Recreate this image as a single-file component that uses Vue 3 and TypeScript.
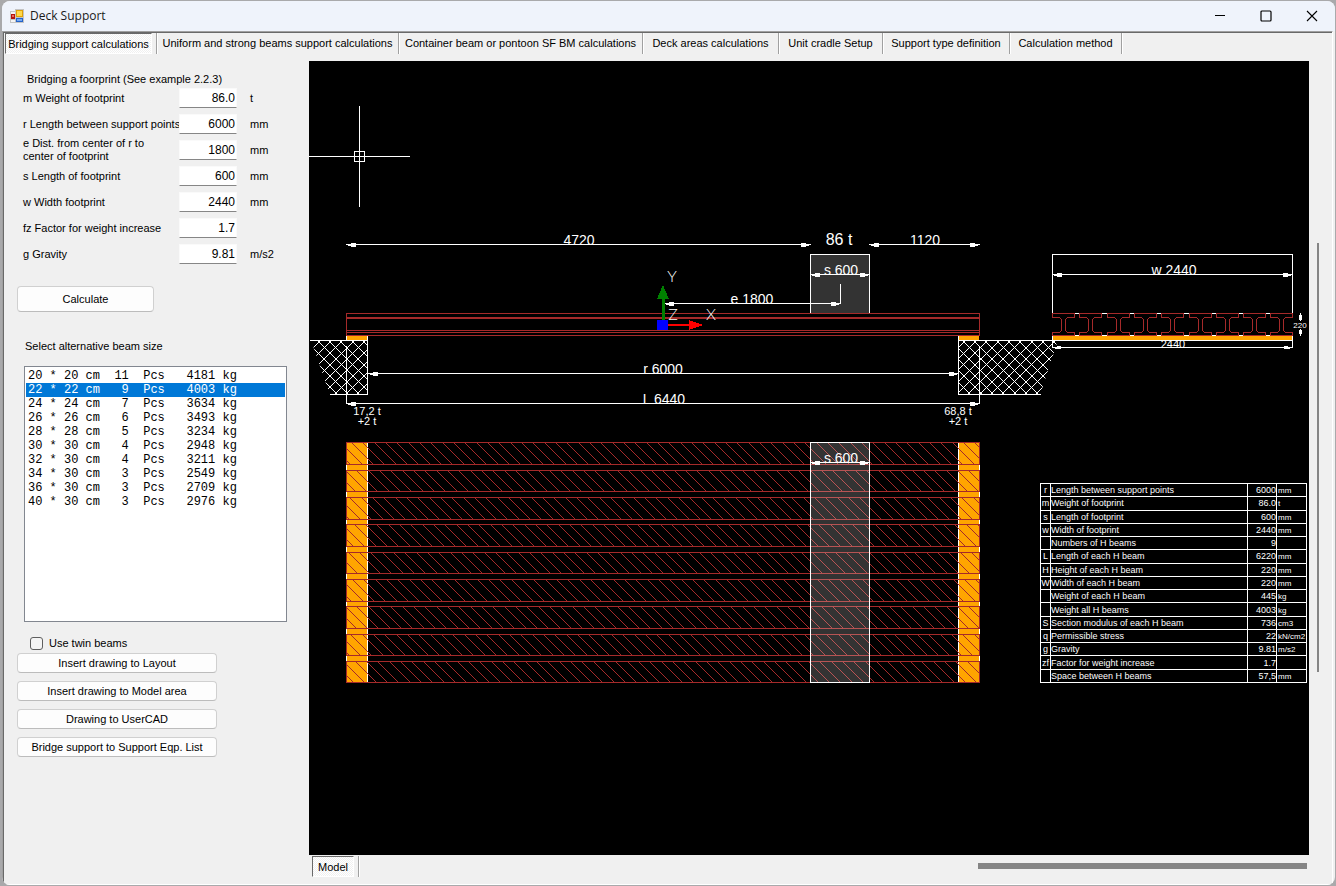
<script setup lang="ts">
import { ref } from 'vue'

interface Field { id: string; label: string; value: string; unit: string }
interface Dim { x1: number; x2: number; y: number; text?: string; tx?: number }

const tabs: string[] = [
  'Bridging support calculations',
  'Uniform and strong beams support calculations',
  'Container beam or pontoon SF BM calculations',
  'Deck areas calculations',
  'Unit cradle Setup',
  'Support type definition',
  'Calculation method',
]
const activeTab = ref(0)

const fields = ref<Field[]>([
  { id: 'm', label: 'm Weight of footprint', value: '86.0', unit: 't' },
  { id: 'r', label: 'r Length between support points', value: '6000', unit: 'mm' },
  { id: 'e', label: 'e Dist. from center of r to\ncenter of footprint', value: '1800', unit: 'mm' },
  { id: 's', label: 's Length of footprint', value: '600', unit: 'mm' },
  { id: 'w', label: 'w Width footprint', value: '2440', unit: 'mm' },
  { id: 'fz', label: 'fz Factor for weight increase', value: '1.7', unit: '' },
  { id: 'g', label: 'g Gravity', value: '9.81', unit: 'm/s2' },
])

const beamSizes: [number, number, number, number][] = [
  [20, 20, 11, 4181], [22, 22, 9, 4003], [24, 24, 7, 3634], [26, 26, 6, 3493],
  [28, 28, 5, 3234], [30, 30, 4, 2948], [32, 30, 4, 3211], [34, 30, 3, 2549],
  [36, 30, 3, 2709], [40, 30, 3, 2976],
]
const selectedBeam = ref(1)
const twin = ref(false)
const beamLabel = (b: [number, number, number, number]): string =>
  `${b[0]} * ${b[1]} cm  ${String(b[2]).padStart(2)}  Pcs   ${b[3]} kg`.replace(/ /g, '\u00a0')

const actions: string[] = [
  'Insert drawing to Layout',
  'Insert drawing to Model area',
  'Drawing to UserCAD',
  'Bridge support to Support Eqp. List',
]

const rows: [string, string, string, string][] = [
  ['r', 'Length between support points', '6000', 'mm'],
  ['m', 'Weight of footprint', '86.0', 't'],
  ['s', 'Length of footprint', '600', 'mm'],
  ['w', 'Width of footprint', '2440', 'mm'],
  ['', 'Numbers of H beams', '9', ''],
  ['L', 'Length of each H beam', '6220', 'mm'],
  ['H', 'Height of each H beam', '220', 'mm'],
  ['W', 'Width of each H beam', '220', 'mm'],
  ['', 'Weight of each H beam', '445', 'kg'],
  ['', 'Weight all H beams', '4003', 'kg'],
  ['S', 'Section modulus of each H beam', '736', 'cm3'],
  ['q', 'Permissible stress', '22', 'kN/cm2'],
  ['g', 'Gravity', '9.81', 'm/s2'],
  ['zf', 'Factor for weight increase', '1.7', ''],
  ['', 'Space between H beams', '57,5', 'mm'],
]

// One-pixel lines built as filled shapes so that they stay crisp; all wind the same way.
const rect = (x: number, y: number, w: number, h: number): string => `M${x} ${y}h${w}v${h}h${-w}z`
const hl = (x1: number, x2: number, y: number, t = 1): string => rect(x1, y, x2 - x1 + 1, t)
const vl = (x: number, y1: number, y2: number): string => rect(x, y1, 1, y2 - y1 + 1)
const diag = (x: number, y: number, n: number, dir: number): string => `M${x} ${y}h1l${dir * n} ${n}h-1z`
const box = (x1: number, y1: number, x2: number, y2: number): string =>
  hl(x1, x2, y1) + hl(x1, x2, y2) + vl(x1, y1, y2) + vl(x2, y1, y2)
const dimPath = (x1: number, x2: number, y: number): string =>
  hl(x1, x2, y) +
  rect(x1 + 2, y, 4, 2) + rect(x1 + 5, y - 1, 5, 4) +
  rect(x2 - 5, y, 4, 2) + rect(x2 - 9, y - 1, 5, 4)

const dims: Dim[] = [
  { x1: 346, x2: 810, y: 244, text: '4720', tx: 579 },
  { x1: 869, x2: 979, y: 244, text: '1120', tx: 925 },
  { x1: 810, x2: 869, y: 274, text: 's 600', tx: 841 },
  { x1: 664, x2: 840, y: 303, text: 'e 1800', tx: 752 },
  { x1: 368, x2: 958, y: 373, text: 'r 6000', tx: 663 },
  { x1: 346, x2: 979, y: 403, text: 'L 6440', tx: 664 },
  { x1: 1052, x2: 1292, y: 274, text: 'w 2440', tx: 1174 },
]

const sideBeam = hl(346, 979, 313) + hl(346, 979, 317, 2) + hl(346, 979, 330) + hl(346, 979, 332) +
  hl(346, 979, 335) + vl(346, 313, 335) + vl(979, 313, 335)

const groundLines = hl(310, 367, 340) + vl(367, 336, 394) + hl(330, 367, 394) + vl(346, 346, 403) +
  hl(958, 1292, 340) + vl(958, 336, 394) + hl(958, 1040, 394) + vl(979, 346, 403) + vl(346, 336, 340)

const crossHatch = (nodeX: number, from: number, to: number): string => {
  let d = ''
  const step = 34 / 3
  for (let k = -20; k < 20; k++) {
    const x = nodeX + k * step
    if (x < from - 70 || x > to + 70) continue
    d += diag(x - 2, 340, 56, 1) + diag(x + 2, 340, 56, -1)
  }
  return d
}
const leftHatch = crossHatch(318, 309, 368)
const rightHatch = crossHatch(963, 958, 1060)

const planTops = [442, 470, 497, 524, 552, 579, 606, 634, 661]
const planBottoms = [464, 491, 519, 546, 573, 601, 628, 655, 682]
const planOutline = planTops.map((t, i) => box(346, t, 979, planBottoms[i])).join('')
const planHatch = planTops.map((t, i) => {
  const b = planBottoms[i]
  let d = ''
  for (let k = -40; k < 70; k++) {
    const c = -68.7 + (k * 34) / 3
    const x1 = Math.max(c + t, 346)
    const x2 = Math.min(c + b, 979)
    if (x2 > x1) d += diag(x1, x1 - c, x2 - x1, 1)
  }
  return d
}).join('')

const sections = Array.from({ length: 9 }, (_, i) => 1052 + Math.round(i * 27.3))
const outline = (pts: [number, number][]): string => {
  let d = ''
  pts.forEach((p, i) => {
    const q = pts[(i + 1) % pts.length]
    if (p[1] === q[1]) d += hl(Math.min(p[0], q[0]), Math.max(p[0], q[0]), p[1])
    else if (p[0] === q[0]) d += vl(p[0], Math.min(p[1], q[1]), Math.max(p[1], q[1]))
    else {
      const sx = Math.sign(q[0] - p[0])
      const sy = Math.sign(q[1] - p[1])
      for (let k = 1; k < Math.abs(q[0] - p[0]); k++) d += rect(p[0] + sx * k, p[1] + sy * k, 1, 1)
    }
  })
  return d
}
const sectionPath = sections.map((x) => outline([
  [x, 313], [x + 22, 313], [x + 22, 317], [x + 15, 317], [x + 13, 319], [x + 13, 330], [x + 15, 332],
  [x + 22, 332], [x + 22, 335], [x, 335], [x, 332], [x + 7, 332], [x + 9, 330], [x + 9, 319],
  [x + 7, 317], [x, 317],
])).join('')

const frontLines = box(1052, 254, 1292, 313) + hl(1052, 1292, 335) + vl(1052, 336, 347) + vl(1292, 336, 347)
const frontDim = hl(1052, 1292, 347) + rect(1055, 347, 3, 2) + rect(1057, 346, 4, 3) +
  rect(1287, 347, 3, 2) + rect(1284, 346, 4, 3)
const heightDim = vl(1300, 313, 320) + vl(1300, 329, 335) + rect(1299, 315, 3, 5) + rect(1299, 330, 3, 4)
const cursor = vl(359, 106, 206) + hl(309, 409, 156) + box(354, 151, 364, 161)
const loadBox = hl(810, 869, 254) + vl(810, 254, 312) + vl(869, 254, 312) + vl(840, 284, 303)
const planEdges = vl(346, 442, 682) + vl(367, 442, 682) + vl(958, 442, 682) + vl(979, 442, 682)
</script>

<template>
  <div class="desktop">
    <div class="window">
      <header class="titlebar">
        <svg class="app-icon" viewBox="0 0 14 15" width="14" height="15" aria-hidden="true">
          <path d="M0 2h5V0h9v14H0z" fill="#c4c4c4" />
          <path d="M1 3h4v2H1zM1 11h4v2H1z" fill="#f4f4f4" />
          <rect x="1" y="5" width="4" height="5" fill="#b5130c" />
          <rect x="2" y="6" width="2" height="2" fill="#e8695f" />
          <rect x="6" y="1" width="7" height="7" fill="#e0a106" />
          <rect x="7" y="2" width="5" height="5" fill="#ffd84a" />
          <rect x="6" y="9" width="7" height="4" fill="#2563c9" />
          <rect x="7" y="10" width="5" height="2" fill="#76a9f2" />
        </svg>
        <h1>Deck Support</h1>
        <div class="caption">
          <button type="button" aria-label="Minimize">
            <svg viewBox="0 0 12 12" width="12" height="12"><path d="M1 5h10v1H1z" /></svg>
          </button>
          <button type="button" aria-label="Maximize">
            <svg viewBox="0 0 12 12" width="12" height="12"><rect x="1" y="1" width="10" height="10" rx="1" fill="none" stroke="#000" stroke-width="1.2" /></svg>
          </button>
          <button type="button" aria-label="Close">
            <svg viewBox="0 0 12 12" width="12" height="12"><path d="M1 1l10 10M11 1L1 11" stroke="#000" stroke-width="1.1" /></svg>
          </button>
        </div>
      </header>

      <main class="client">
        <nav class="tabs" role="tablist">
          <div v-for="(t, i) in tabs" :key="t" class="tab-cell">
            <button type="button" role="tab" class="tab" :class="{ active: activeTab === i }" :aria-selected="activeTab === i" @click="activeTab = i">{{ t }}</button>
          </div>
        </nav>

        <div class="body">
          <aside class="side">
            <h2>Bridging a foorprint (See example 2.2.3)</h2>
            <form class="fields" @submit.prevent>
              <template v-for="f in fields" :key="f.id">
                <label :for="f.id">{{ f.label }}</label>
                <input :id="f.id" v-model="f.value" type="text">
                <span>{{ f.unit }}</span>
              </template>
            </form>
            <button type="button" class="btn calc">Calculate</button>
            <label class="list-label" for="beams">Select alternative beam size</label>
            <select id="beams" v-model="selectedBeam" class="beam-list" size="18">
              <option v-for="(b, i) in beamSizes" :key="i" :value="i" :class="{ picked: selectedBeam === i }">{{ beamLabel(b) }}</option>
            </select>
            <label class="check"><input v-model="twin" type="checkbox">Use twin beams</label>
            <div class="actions">
              <button v-for="a in actions" :key="a" type="button" class="btn">{{ a }}</button>
            </div>
          </aside>

          <section class="viewer">
            <div class="canvas">
              <svg class="drawing" viewBox="309 61 1000 794" preserveAspectRatio="xMinYMin meet" shape-rendering="crispEdges">
                <defs>
                  <clipPath id="groundL"><path d="M311 340H368V395H330z" /></clipPath>
                  <clipPath id="groundR"><path d="M958 340H1058L1040 395H958z" /></clipPath>
                </defs>

                <path class="w" :d="cursor" />

                <rect x="810" y="254" width="60" height="60" fill="#333" />
                <path class="w" :d="loadBox" />

                <path class="brown" :d="sideBeam" />
                <g clip-path="url(#groundL)"><path class="w" :d="leftHatch" /></g>
                <g clip-path="url(#groundR)"><path class="w" :d="rightHatch" /></g>
                <g fill="#ffa500">
                  <rect x="347" y="336" width="20" height="4" />
                  <rect x="959" y="336" width="20" height="4" />
                  <rect x="346" y="442" width="22" height="241" />
                  <rect x="958" y="442" width="22" height="241" />
                </g>
                <path class="w" :d="groundLines" />

                <path class="w" :d="planEdges" />
                <path class="brown" :d="planHatch" />
                <path class="brown" :d="planOutline" />
                <rect x="811" y="443" width="58" height="239" fill="#fff" fill-opacity="0.2" />
                <path class="w" :d="box(810, 442, 869, 682)" />

                <path class="w" :d="frontLines" />
                <path class="brown" :d="sectionPath" />

                <g class="dim-text">
                  <text v-for="d in dims" :key="d.text" :x="d.tx" :y="d.y + 1">{{ d.text }}</text>
                  <text x="841" y="463">s 600</text>
                  <text class="load" x="839" y="245">86 t</text>
                  <text class="small" x="367" y="415">17,2 t</text>
                  <text class="small" x="367" y="425">+2 t</text>
                  <text class="small" x="958" y="415">68,8 t</text>
                  <text class="small" x="958" y="425">+2 t</text>
                  <text class="small" x="1173" y="348">2440</text>
                </g>
                <rect x="1053" y="336" width="239" height="4" fill="#ffa500" />
                <path class="w" :d="hl(1052, 1292, 340)" />
                <g class="w">
                  <path v-for="d in dims" :key="d.text" :d="dimPath(d.x1, d.x2, d.y)" />
                  <path :d="dimPath(810, 869, 462)" />
                  <path :d="frontDim" />
                  <path :d="heightDim" />
                </g>
                <text class="tiny" x="1300" y="328">220</text>

                <rect x="662" y="297" width="3" height="24" fill="#008000" />
                <path d="M663 285L669 299H657z" fill="#008000" />
                <rect x="668" y="324" width="22" height="2" fill="#f00" />
                <path d="M689 320L703 325L689 330z" fill="#f00" />
                <rect x="657" y="320" width="11" height="10" fill="#00f" />
                <g class="axis">
                  <text x="672" y="282">Y</text>
                  <text x="673" y="320">Z</text>
                  <text x="711" y="320">X</text>
                </g>

                <foreignObject x="1040" y="483" width="268" height="202">
                  <table class="data">
                    <colgroup><col class="c1"><col class="c2"><col class="c3"><col class="c4"></colgroup>
                    <tbody>
                      <tr v-for="r in rows" :key="r[1]">
                        <td class="sym">{{ r[0] }}</td>
                        <td>{{ r[1] }}</td>
                        <td class="num">{{ r[2] }}</td>
                        <td class="unit">{{ r[3] }}</td>
                      </tr>
                    </tbody>
                  </table>
                </foreignObject>
              </svg>
            </div>
            <div class="vbar"><div class="vthumb"></div></div>
            <div class="bottom">
              <div class="tab-cell sheet"><button type="button" class="tab active">Model</button></div>
              <div class="hthumb"></div>
            </div>
          </section>
        </div>
      </main>
    </div>
  </div>
</template>

<style>
body { margin: 0; background: #a9a9ab; }
</style>

<style scoped>
* { box-sizing: border-box; }
.desktop {
  min-height: 100vh; display: flex; padding: 1px 1px 1px 2px; background: #a9a9ab;
  font-family: "Liberation Sans", Arial, sans-serif; font-size: 11px; line-height: 13px; color: #000;
}
.window {
  flex: 1; min-width: 0; display: flex; flex-direction: column; background: #f0f0f0;
  border-radius: 8px; overflow: hidden;
}
.titlebar { height: 30px; flex: none; display: flex; align-items: center; background: #eff3fb; padding-left: 8px; }
.app-icon { margin-right: 6px; }
h1 { margin: 0; flex: 1; font: 400 12px/16px "Open Sans", "Noto Sans", sans-serif; color: #1a1a1a; }
.caption { display: flex; height: 100%; }
.caption button { width: 46px; border: 0; padding: 0; background: none; display: flex; align-items: center; justify-content: center; }
.client {
  flex: 1; display: flex; flex-direction: column; margin-right: 2px;
  border-top: 1px solid #a0a0a0; border-left: 1px solid #a0a0a0; border-bottom: 1px solid #fff; border-right: 1px solid #fff;
  box-shadow: inset 1px 1px 0 #696969;
}
.tabs {
  display: grid; grid-template-columns: 152px 242px 244px 136px 104px 127px 112px;
  height: 22px; margin: 1px 0 0 2px;
}
.tab-cell { height: 21px; border-right: 1px solid #a0a0a0; display: flex; box-shadow: 1px 0 0 #fff; }
.tab { flex: 1; height: 20px; font: inherit; color: inherit; background: none; border: 0; padding: 1px 0 0; white-space: nowrap; }
.tab.active {
  height: 21px; margin-right: 4px; padding: 2px 0 0; border: 1px solid; border-color: #696969 #fff #fff #696969;
  background: repeating-conic-gradient(#fff 0 25%, #f0f0f0 0 50%) 0 0 / 2px 2px;
}
.body { flex: 1; display: flex; padding-top: 6px; }
.side { width: 306px; flex: none; padding: 12px 0 0 14px; }
h2 { font: inherit; line-height: 11px; margin: 0 0 0 10px; padding-top: 1px; }
.fields { display: grid; grid-template-columns: 156px 58px 1fr; grid-auto-rows: 26px; align-items: center; margin: 0 0 19px 6px; }
.fields label { white-space: pre; }
.fields span { padding-left: 13px; }
.fields input {
  height: 20px; width: 58px; padding: 0 1px; text-align: right; font: inherit; font-size: 12px; color: #000;
  background: #fff; border: 1px solid #fafafa; border-bottom-color: #868686; outline: none;
}
.btn {
  font: inherit; color: #000; background: #fdfdfd; border: 1px solid #d0d0d0; border-bottom-color: #bcbcbc;
  border-radius: 4px; padding: 0; width: 200px; height: 20px;
}
.calc { width: 137px; height: 26px; display: block; margin-bottom: 28px; }
.list-label { display: block; margin: 0 0 13px 8px; }
.beam-list {
  display: block; width: 263px; height: 256px; margin-left: 7px; padding: 2px 1px; border: 1px solid #828790;
  border-radius: 0; background: #fff; color: #000; outline: none; overflow: hidden;
  font: 12px/14px "Liberation Mono", "Courier New", monospace;
}
.beam-list option { height: 14px; min-height: 14px; padding: 0 2px; }
.beam-list option.picked { background: #0078d7 linear-gradient(#0078d7, #0078d7); color: #fff; }
.check { display: flex; align-items: center; height: 13px; margin: 15px 0 3px 13px; }
.check input {
  appearance: none; width: 13px; height: 13px; margin: 0 6px 0 0; border: 1px solid #5f5f5f; border-radius: 3px; background: #f5f5f5;
}
.check input:checked { background: #0078d7; }
.actions { display: flex; flex-direction: column; align-items: flex-start; gap: 8px; }
.viewer { flex: 1; min-width: 0; display: grid; grid-template-columns: 1fr 23px; grid-template-rows: 1fr 29px; }
.canvas { background: #000; min-width: 0; }
.drawing { display: block; width: 100%; }
.vbar { padding: 182px 0 0 8px; }
.vthumb { width: 2px; height: 429px; background: #858585; }
.bottom { display: flex; justify-content: space-between; padding: 1px 2px 0 3px; }
.sheet { width: 47px; }
.hthumb { width: 329px; height: 6px; margin-top: 7px; background: #858585; }

.w { fill: #fff; }
.brown { fill: #a52a2a; }
.dim-text text { fill: #fff; font-family: "Liberation Sans", Arial, sans-serif; font-size: 14px; text-anchor: middle; }
.dim-text .load { font-size: 16px; }
.dim-text .small { font-size: 11px; }
.tiny { fill: #fff; font-family: "Liberation Sans", Arial, sans-serif; font-size: 8px; text-anchor: middle; }
.axis text { fill: #fff; font-family: Lato, "Liberation Sans", sans-serif; font-weight: 300; font-size: 16px; text-anchor: middle; }
.data {
  width: 267px; height: 200px; table-layout: fixed; border-collapse: collapse; color: #fff; background: #000;
  font-family: "Liberation Sans", Arial, sans-serif; font-size: 9px; line-height: 11px;
}
.data td { border: 1px solid #fff; padding: 1px 0 0; white-space: nowrap; }
.c1 { width: 10px; }
.c2 { width: 197px; }
.c3 { width: 29px; }
.c4 { width: 30px; }
.data .sym { text-align: center; }
.data .num { text-align: right; }
.data .unit { font-size: 8px; padding-left: 1px; }
</style>
